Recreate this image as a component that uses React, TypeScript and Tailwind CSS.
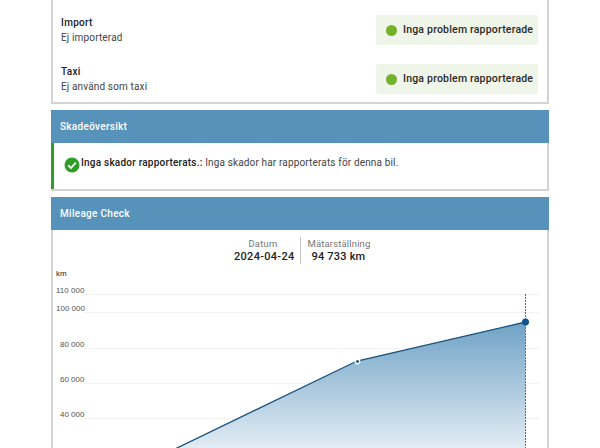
import React from 'react';

const font = { fontFamily: 'Roboto, sans-serif' };

const StatusRow = ({ title, text }: { title: string; text: string }) => (
  <div className="flex h-[30px] items-center justify-between">
    <div className="text-[10px] leading-[15px] tracking-[0.15px] text-[#444]">
      <div className="font-medium tracking-[0.3px] text-[#222]">{title}</div>
      <div>{text}</div>
    </div>
    <div className="flex h-[30px] w-[162px] items-center gap-[6px] rounded-[2px] bg-[#f0f5e9] pl-[10px]">
      <span className="h-[11px] w-[11px] shrink-0 rounded-full bg-[#73b22a]" />
      <span className="whitespace-nowrap text-[10.5px] font-medium tracking-[0.2px] text-[#2a2a2a]">Inga problem rapporterade</span>
    </div>
  </div>
);

const CardHeader = ({ title }: { title: string }) => (
  <div className="flex h-[33px] items-center bg-[#5692ba] pb-px pl-[9px] text-[10px] font-medium tracking-[0.3px] text-white">
    {title}
  </div>
);

const axis = [
  { label: '110 000', y: 294, tx: 56 },
  { label: '100 000', y: 312, tx: 56 },
  { label: '80 000', y: 348, tx: 60 },
  { label: '60 000', y: 383, tx: 60 },
  { label: '40 000', y: 418, tx: 60 },
  { label: '20 000', y: 454, tx: 60 },
];

// chart coords are page coords shifted by the svg's offset (53, 265)
const MileageChart = () => (
  <svg width="494" height="183" viewBox="53 265 494 183" className="block">
    <defs>
      <linearGradient id="area" x1="0" y1="0" x2="0" y2="1">
        <stop offset="0" stopColor="#6fa2c6" />
        <stop offset="1" stopColor="#ffffff" />
      </linearGradient>
    </defs>
    <text x="56" y="276" fontSize="8" fill="#222" fontFamily="Liberation Sans, sans-serif">km</text>
    {axis.map((a) => (
      <g key={a.label}>
        <line x1="84" x2="539" y1={a.y + 0.5} y2={a.y + 0.5} stroke="#f2f2f2" />
        <text x={a.tx} y={a.y - 1} fontSize="8" fill="#555" fontFamily="Liberation Sans, sans-serif">{a.label}</text>
      </g>
    ))}
    <path d="M146 463 L357 361 L525.5 322 L525.5 480 L146 480 Z" fill="url(#area)" />
    <path d="M146 463 L357 361 L525.5 322" fill="none" stroke="#17527f" strokeWidth="1.3" />
    <line x1="525.5" x2="525.5" y1="294" y2="448" stroke="#2f78b0" strokeDasharray="2 1" />
    <circle cx="357.5" cy="361.5" r="2.2" fill="#17527f" stroke="#fff" strokeWidth="1.4" />
    <circle cx="525.5" cy="322" r="3.5" fill="#0f5490" />
  </svg>
);

export default function App() {
  return (
    <div style={font} className="flex h-[448px] w-[600px] flex-col gap-[6px] overflow-hidden bg-white px-[51px]">
      <section className="flex h-[104px] shrink-0 flex-col gap-[19px] border-x-2 border-b-2 border-[#d3d3d3] pl-[8px] pr-[9px] pt-[15px]">
        <StatusRow title="Import" text="Ej importerad" />
        <StatusRow title="Taxi" text="Ej använd som taxi" />
      </section>

      <section className="h-[81px] shrink-0 border-x-2 border-b-2 border-[#d3d3d3]">
        <div className="-mx-[2px]">
          <CardHeader title="Skadeöversikt" />
        </div>
        <div className="-ml-[2px] flex h-[46px] border-l-[3px] border-[#2e9e26] pl-[10px] pt-[12px]">
          <svg width="16" height="16" viewBox="0 0 16 16" className="mt-[2px] shrink-0">
            <circle cx="8" cy="8" r="7.5" fill="#2e9e26" />
            <path d="M4.2 8.3 L7 11 L11.8 5.6" fill="none" stroke="#fff" strokeWidth="1.8" />
          </svg>
          <p className="ml-[1px] text-[10px] leading-[16px] tracking-[0.15px] text-[#444]">
            <span className="font-medium tracking-[0.22px] text-[#222]">Inga skador rapporterats.:</span> Inga skador har rapporterats för denna bil.
          </p>
        </div>
      </section>

      <section className="min-h-0 flex-1 border-x-2 border-[#d3d3d3]">
        <div className="-mx-[2px]">
          <CardHeader title="Mileage Check" />
        </div>
        <div className="flex h-[35px] items-center justify-center pt-[6px]">
          <div className="w-[70px] pr-[5px] text-right">
            <div className="mr-[17px] text-[9.5px] leading-[13px] tracking-[0.2px] text-[#777]">Datum</div>
            <div className="text-[11px] font-medium leading-[14px] tracking-[0.3px] text-[#222]">2024-04-24</div>
          </div>
          <div className="h-[27px] w-px bg-[#c8c8c8]" />
          <div className="w-[70px] pl-[7px] text-left">
            <div className="text-[9.5px] leading-[13px] tracking-[0.15px] text-[#777]">Mätarställning</div>
            <div className="pl-[4px] text-[11px] font-medium leading-[14px] tracking-[0.2px] text-[#222]">94 733 km</div>
          </div>
        </div>
        <MileageChart />
      </section>
    </div>
  );
}
